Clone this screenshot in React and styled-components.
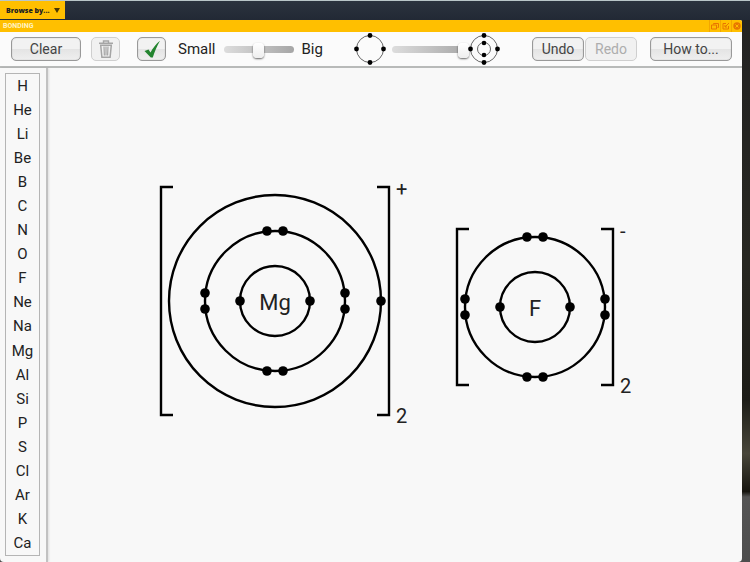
import { useState } from 'react';
import styled, { createGlobalStyle } from 'styled-components';

const palette = {
  text: '#222222',
  accent: '#ffbf00',
  accentDark: '#e87600',
  surface: '#f8f8f8',
  line: '#b8bab9',
  bar: '#252c37',
  tick: '#23842f',
};

const elements = [
  'H', 'He', 'Li', 'Be', 'B', 'C', 'N', 'O', 'F', 'Ne',
  'Na', 'Mg', 'Al', 'Si', 'P', 'S', 'Cl', 'Ar', 'K', 'Ca',
];

const GlobalStyle = createGlobalStyle`
  * {
    box-sizing: border-box;
  }
  body {
    margin: 0;
    background: ${palette.bar};
    color: ${palette.text};
    font-family: Roboto, 'Liberation Sans', sans-serif;
    font-size: 15px;
  }
  button {
    font: inherit;
    color: inherit;
    padding: 0;
  }
`;

const Page = styled.div`
  min-height: 100vh;
  display: flex;
  flex-direction: column;
`;

const SiteBar = styled.header`
  height: 20px;
  border-top: 1px solid #b9c6c8;
  background: linear-gradient(#2b333e, #222935);
`;

const BrowseButton = styled.button`
  display: flex;
  align-items: center;
  gap: 5px;
  height: 18px;
  padding: 0 5px 0 6px;
  border: none;
  background: ${palette.accent};
  font-family: 'Open Sans', sans-serif;
  font-size: 7px;
  font-weight: 800;
`;

const Backdrop = styled.div`
  flex: 1;
  display: flex;
  padding-right: 8px;
  background: linear-gradient(
    #232323 0%,
    #272721 45%,
    #1d1d18 70%,
    #48463a 80%,
    #16150f 87%,
    #555555 88%,
    #4d4d4d 100%
  );
`;

const Window = styled.main`
  flex: 1;
  display: flex;
  flex-direction: column;
  background: ${palette.surface};
  border-radius: 0 2px 4px 4px;
  overflow: hidden;
`;

const TitleBar = styled.div`
  height: 12px;
  display: flex;
  align-items: center;
  justify-content: space-between;
  padding-left: 3px;
  background: ${palette.accent};
`;

const Title = styled.h1`
  margin: 0;
  color: #fff3c4;
  font-size: 7px;
  font-weight: 700;
`;

const WindowControls = styled.div`
  display: flex;
`;

const WindowButton = styled.button`
  width: 11px;
  height: 12px;
  display: flex;
  align-items: center;
  justify-content: center;
  border: none;
  border-left: 1px solid #f3a600;
  background: none;
  color: ${palette.accentDark};
`;

const Toolbar = styled.div`
  height: 36px;
  display: flex;
  align-items: center;
  justify-content: space-between;
  padding: 0 10px 0 11px;
  border-bottom: 2px solid ${palette.line};
  background: #fbfbfb;
`;

const ToolGroup = styled.div`
  display: flex;
  align-items: center;
  gap: ${(props) => props.$gap || 0}px;
`;

const ToolButton = styled.button`
  width: ${(props) => props.$width}px;
  height: 24px;
  display: flex;
  align-items: center;
  justify-content: center;
  border: 1px solid #999999;
  border-radius: 5px;
  background: linear-gradient(#f2f2f2 0%, #f2f2f2 50%, #e4e4e4 51%, #efefef 100%);
  box-shadow: inset 0 0 1px #999999;
  color: #444444;
  font-size: 14px;
  &:disabled {
    border-color: #cfcfcf;
    box-shadow: none;
    background: #f1f1f1;
    color: #adadad;
  }
`;

const SliderLabel = styled.label`
  white-space: nowrap;
`;

const Slider = styled.input`
  appearance: none;
  width: ${(props) => props.$width}px;
  height: 16px;
  margin: 0;
  background: none;
  &::-webkit-slider-runnable-track {
    height: 7px;
    border-radius: 4px;
    background: linear-gradient(90deg, #dddddd, #a6a6a6);
  }
  &::-webkit-slider-thumb {
    appearance: none;
    width: 11px;
    height: 15px;
    margin-top: -3px;
    border-radius: 4px;
    background: linear-gradient(#ffffff, #eeeeee);
    box-shadow: 0 1px 2px rgba(0, 0, 0, 0.6);
  }
`;

const ShellSvg = styled.svg`
  overflow: visible;
`;

const Workspace = styled.div`
  flex: 1;
  display: flex;
`;

const Sidebar = styled.nav`
  width: 48px;
  display: flex;
  padding: 5px 6px 6px 5px;
  border-right: 2px solid #c2c2c2;
  box-shadow: 1px 0 2px rgba(0, 0, 0, 0.1);
`;

const ElementList = styled.ul`
  flex: 1;
  display: flex;
  flex-direction: column;
  margin: 0;
  padding: 0;
  border: 1px solid #b5b5b5;
  list-style: none;
`;

const ElementItem = styled.li`
  flex: 1;
  display: flex;
`;

const ElementButton = styled.button`
  flex: 1;
  min-height: 20px;
  border: none;
  background: none;
`;

const Canvas = styled.section`
  flex: 1;
  position: relative;
  overflow: hidden;
`;

const IonDrawing = styled.svg`
  position: absolute;
  left: ${(props) => props.$x}px;
  top: ${(props) => props.$y}px;
  overflow: visible;
  font-size: 22px;
  fill: ${palette.text};
`;

function TrashIcon() {
  return (
    <svg width="16" height="20" viewBox="0 0 16 20" fill="none" stroke="#a5a5a5">
      <path d="M1 4.2h14M5.5 3.4V2h5v1.4" strokeWidth="1.4" />
      <path d="M2.7 6.2l1.2 12h8.2l1.2-12z" strokeWidth="1.5" />
      <path d="M6 7.5l.4 9M8 7.5v9M10 7.5l-.4 9" strokeWidth="1.2" />
    </svg>
  );
}

function TickIcon() {
  return (
    <svg width="18" height="18" viewBox="0 0 18 18">
      <path d="M1.5 11l4-1.4 2 3C9.8 8 13 4 17 .8 14 6 11.8 11.5 9.8 17.5H7.8z" fill={palette.tick} />
    </svg>
  );
}

function ShellIcon({ inner }) {
  return (
    <ShellSvg width="30" height="30" viewBox="0 0 30 30">
      <g fill="none" stroke="#666666">
        <circle cx="15" cy="15" r="13.5" />
        {inner && <circle cx="15" cy="15" r="6.5" />}
      </g>
      <circle cx="15" cy="1.5" r="2.4" />
      <circle cx="28.5" cy="15" r="2.4" />
      <circle cx="15" cy="28.5" r="2.4" />
      <circle cx="1.5" cy="15" r="2.4" />
      {inner && (
        <>
          <circle cx="15" cy="9" r="2.3" />
          <circle cx="15" cy="21" r="2.3" />
        </>
      )}
    </ShellSvg>
  );
}

/**
 * An ion with its electron shells, square brackets, charge and count.
 * Each shell has a radius and its electrons as [x, y] from the nucleus.
 */
function Ion({ symbol, charge, count, shells, x, y }) {
  const outer = shells[shells.length - 1].radius;
  const half = outer + 8;
  const size = half * 2;
  const arm = 12;

  return (
    <IonDrawing
      $x={x - half}
      $y={y - half}
      width={size}
      height={size}
      viewBox={`${-half} ${-half} ${size} ${size}`}
      role="img"
      aria-label={`${symbol} ion`}
    >
      <g fill="none" stroke="#000000" strokeWidth="2.4">
        <path d={`M${arm - half} ${-half}H${-half}V${half}H${arm - half}`} />
        <path d={`M${half - arm} ${-half}H${half}V${half}H${half - arm}`} />
        {shells.map(({ radius }) => (
          <circle key={radius} r={radius} />
        ))}
      </g>
      {shells.map(({ radius, electrons }) =>
        electrons.map(([cx, cy]) => (
          <circle key={`${radius}-${cx}-${cy}`} cx={cx} cy={cy} r="4.8" fill="#000000" />
        )),
      )}
      <text y="9" textAnchor="middle">
        {symbol}
      </text>
      <text x={half + 7} y={9 - half} fontSize="20">
        {charge}
      </text>
      <text x={half + 7} y={half + 8} fontSize="20">
        {count}
      </text>
    </IonDrawing>
  );
}

const firstShell = {
  radius: 35,
  electrons: [[-35, 0], [35, 0]],
};

const secondShell = {
  radius: 70,
  electrons: [
    [-8, -70], [8, -70],
    [70, -8], [70, 8],
    [8, 70], [-8, 70],
    [-70, 8], [-70, -8],
  ],
};

const thirdShell = {
  radius: 106,
  electrons: [[106, 0]],
};

export default function App() {
  const [size, setSize] = useState(50);
  const [shellMode, setShellMode] = useState(100);

  return (
    <>
      <GlobalStyle />
      <Page>
        <SiteBar>
          <BrowseButton>
            Browse by...
            <svg width="6" height="5" viewBox="0 0 6 5">
              <path d="M0 0h6L3 5z" fill="#4a3800" />
            </svg>
          </BrowseButton>
        </SiteBar>
        <Backdrop>
          <Window>
            <TitleBar>
              <Title>BONDING</Title>
              <WindowControls>
                <WindowButton aria-label="Restore">
                  <svg width="8" height="8" viewBox="0 0 8 8" fill="none" stroke="currentColor">
                    <path d="M2.5 2.5v-1h5v4h-1M.5 3h5v4h-5z" />
                  </svg>
                </WindowButton>
                <WindowButton aria-label="Resize">
                  <svg width="8" height="8" viewBox="0 0 8 8" fill="none" stroke="currentColor">
                    <path d="M4 1.5H1v5.5h5.5V4M3 5l4-4M3 3v2h2" />
                  </svg>
                </WindowButton>
                <WindowButton aria-label="Close">
                  <svg width="8" height="8" viewBox="0 0 8 8">
                    <circle cx="4" cy="4" r="3.7" fill="currentColor" />
                    <path d="M2.5 2.5l3 3M5.5 2.5l-3 3" stroke={palette.accent} />
                  </svg>
                </WindowButton>
              </WindowControls>
            </TitleBar>
            <Toolbar>
              <ToolGroup $gap={17}>
                <ToolGroup $gap={10}>
                  <ToolButton $width={70}>Clear</ToolButton>
                  <ToolButton $width={29} disabled aria-label="Delete">
                    <TrashIcon />
                  </ToolButton>
                </ToolGroup>
                <ToolGroup $gap={12}>
                  <ToolButton $width={29} aria-label="Check">
                    <TickIcon />
                  </ToolButton>
                  <ToolGroup $gap={8}>
                    <SliderLabel htmlFor="size">Small</SliderLabel>
                    <Slider
                      id="size"
                      type="range"
                      $width={70}
                      value={size}
                      onChange={(e) => setSize(Number(e.target.value))}
                    />
                    <SliderLabel htmlFor="size">Big</SliderLabel>
                  </ToolGroup>
                </ToolGroup>
              </ToolGroup>
              <ToolGroup>
                <ToolGroup $gap={7}>
                  <ShellIcon />
                  <Slider
                    type="range"
                    aria-label="Shells"
                    $width={77}
                    value={shellMode}
                    onChange={(e) => setShellMode(Number(e.target.value))}
                  />
                </ToolGroup>
                <ShellIcon inner />
              </ToolGroup>
              <ToolGroup $gap={13}>
                <ToolGroup $gap={1}>
                  <ToolButton $width={52}>Undo</ToolButton>
                  <ToolButton $width={52} disabled>
                    Redo
                  </ToolButton>
                </ToolGroup>
                <ToolButton $width={82}>How to...</ToolButton>
              </ToolGroup>
            </Toolbar>
            <Workspace>
              <Sidebar aria-label="Elements">
                <ElementList>
                  {elements.map((symbol) => (
                    <ElementItem key={symbol}>
                      <ElementButton>{symbol}</ElementButton>
                    </ElementItem>
                  ))}
                </ElementList>
              </Sidebar>
              <Canvas>
                <Ion
                  symbol="Mg"
                  charge="+"
                  count={2}
                  shells={[firstShell, secondShell, thirdShell]}
                  x={227}
                  y={233}
                />
                <Ion
                  symbol="F"
                  charge="-"
                  count={2}
                  shells={[firstShell, secondShell]}
                  x={487}
                  y={239}
                />
              </Canvas>
            </Workspace>
          </Window>
        </Backdrop>
      </Page>
    </>
  );
}
